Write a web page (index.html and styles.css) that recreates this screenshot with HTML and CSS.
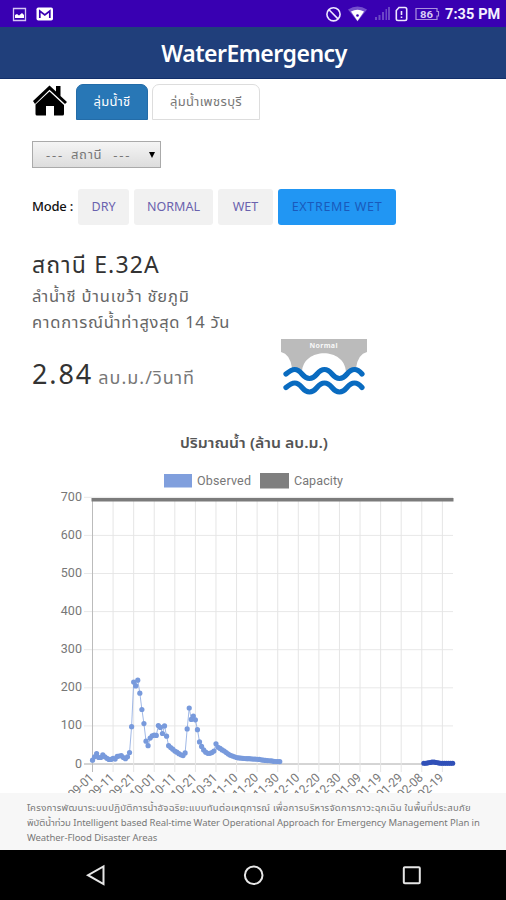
FILE: index.html
```html
<!DOCTYPE html>
<html lang="th">
<head>
<meta charset="utf-8">
<title>WaterEmergency</title>
<link rel="stylesheet" href="styles.css">
</head>
<body>
<div class="phone">
  <div class="status">
    <svg class="status-left" width="60" height="27" viewBox="0 0 60 27">
      <path d="M13.500 8.500h12v12h-12z" fill="none" stroke="#d5c5f4" stroke-width="1.300"/>
      <path d="M15 18v-3l2-1 2 1.500 3-2.500 2 2v3z" fill="#fff"/>
      <rect x="36.500" y="7.500" width="16.500" height="13" rx="1.800" fill="#fff"/>
      <path d="M39.800 18v-7l5 4 5-4v7" fill="none" stroke="#3900b2" stroke-width="1.700"/>
    </svg>
    <svg class="status-right" width="118" height="27" viewBox="322 0 118 27">
      <g fill="none" stroke="#eee8ff" stroke-width="1.600">
        <circle cx="333.500" cy="14.300" r="6.600"/><path d="M329 9.700l9 9.200"/>
        <path d="M399 7.500h6q1.700 0 1.700 1.700v9.600q0 1.700-1.700 1.700h-7q-1.700 0-1.700-1.700v-8.300zM401.500 11v4m0 1.500v1.500"/>
        <path d="M416 8.500h21v3h1.500v4.500H437v3.500h-21z" stroke="#ab91df" stroke-width="1.200"/>
      </g>
      <path d="M348 9.500q9.500-6 19 0l-9.500 12z" fill="#7450cc"/>
      <path d="M351 11.500q6.500-3.500 13 0l-6.500 9.500z" fill="#fff"/><circle cx="357.500" cy="15.500" r="1.300" fill="#3900b2"/>
      <path d="M375 17h2v3h-2zm3.500-2h2v5h-2zm3.500-3h2v8h-2zm3.500-3h1.500v11h-1.500zm2.500-2h2v13h-2z" fill="#6c47c6"/>
      <text class="battery" x="420" y="17.500" textLength="13" lengthAdjust="spacingAndGlyphs">86</text>
    </svg>
    <span class="clock">7:35 PM</span>
  </div>
  <header class="header"><h1>WaterEmergency</h1></header>
  <main class="main">
    <nav class="tabs">
      <svg class="home" width="36" height="34" viewBox="0 0 36 34">
        <path d="M1 17L17.500 1.500 24 7.500V2h4.500v10L35 18l-2 2L17.500 5.700 3 20z"/>
        <path d="M3.500 20.500L17.500 7.500 32 21v9q0 1.500-1.500 1.500H22V22h-8v9.500H5q-1.500 0-1.500-1.500z"/>
      </svg>
      <a class="tab active"><span>ลุ่มน้ำชี</span></a>
      <a class="tab"><span>ลุ่มน้ำเพชรบุรี</span></a>
    </nav>
    <div class="select"><span>---</span><span class="select-name">สถานี</span><span>---</span><i class="caret"></i></div>
    <div class="modes">
      <b class="mode-label">Mode :</b>
      <span class="mode dry">DRY</span><span class="mode normal">NORMAL</span><span class="mode wet">WET</span><span class="mode extreme">EXTREME WET</span>
    </div>
    <section class="station">
      <div class="name">สถานี E.32A</div>
      <div class="place">ลำน้ำชี บ้านเขว้า ชัยภูมิ</div>
      <div class="forecast">คาดการณ์น้ำท่าสูงสุด 14 วัน</div>
      <div class="reading">
        <div class="flow"><span class="value">2.84</span> <span class="unit">ลบ.ม./วินาที</span></div>
        <svg class="bridge" width="88" height="60" viewBox="0 0 88 60">
          <path d="M1 1h86v13q-9 2-11 16v4H66C65 9 23 9 22 34H12v-4Q10 16 1 14z" fill="#bbb"/>
          <text class="bridge-text" x="29.500" y="10" textLength="28">Normal</text>
          <g fill="none" stroke="#096bc0" stroke-width="5.200" stroke-linecap="round">
            <path d="M6 36c7-6 11-6 16 0s10 6 15 0 10-6 15 0 10 6 15 0 10-6 15 0"/>
            <path d="M6 49.500c7-6 11-6 16 0s10 6 15 0 10-6 15 0 10 6 15 0 10-6 15 0"/>
          </g>
        </svg>
      </div>
    </section>
    <svg class="chart" id="chart" width="506" height="368" viewBox="0 425 506 368"></svg>
  </main>
  <footer class="footer">
    <div class="f1">โครงการพัฒนาระบบปฏิบัติการน้ำอัจฉริยะแบบทันต่อเหตุการณ์ เพื่อการบริหารจัดการภาวะฉุกเฉิน ในพื้นที่ประสบภัย</div>
    <div class="f2">พิบัติน้ำท่วม Intelligent based Real-time Water Operational Approach for Emergency Management Plan in</div>
    <div class="f3">Weather-Flood Disaster Areas</div>
  </footer>
  <div class="navbar">
    <svg width="506" height="50" viewBox="0 850 506 50" fill="none" stroke="#e6e6e6" stroke-width="2">
      <path d="M103.500 866.500v17.500L88 875.200z"/><circle cx="253.700" cy="875.300" r="8.800"/><rect x="403.800" y="867.200" width="16" height="16" rx="1"/>
    </svg>
  </div>
</div>
<script src="chart.js"></script>
</body>
</html>
```
FILE: styles.css
```css
* { box-sizing: border-box; }
body { margin: 0; font-family: "Noto Sans", "Noto Sans Thai", "Liberation Sans", sans-serif; background: #fff; color: #333; }
.phone { width: 506px; height: 900px; display: flex; flex-direction: column; overflow: hidden; white-space: nowrap; }
.status { flex: none; height: 27px; background: #3900b2; display: flex; justify-content: space-between; align-items: center; }
.status-right { margin-left: auto; }
.battery { font: bold 9px "Roboto", sans-serif; fill: #d9ccf5; }
.clock { width: 66px; padding-left: 5px; font: 700 14.500px "Roboto", sans-serif; color: #f5f0ff; letter-spacing: .1px; line-height: 27px; padding-top: 1px; }
.header { flex: none; height: 52px; background: #203f7b; border-bottom: 1px solid #122f6b; display: flex; align-items: center; justify-content: center; }
h1 { margin: 0; color: #fff; font-size: 23px; font-weight: 600; line-height: 50px; letter-spacing: -.5px; padding-left: 2px; }
.main { flex: none; height: 714px; overflow: hidden; display: flex; flex-direction: column; align-items: flex-start; }
.tabs { display: flex; height: 41px; padding: 5px 0 0 32px; }
.home { margin-right: 8px; }
.tab { height: 36px; width: 72px; border-radius: 7px 7px 0 0; display: flex; align-items: center; justify-content: center; font-size: 13px; letter-spacing: .35px; color: #777; }
.tab.active { background: #2877b6; color: #fff; margin-right: 4px; border: 1px solid #236ca8; }
.tab:last-child { width: 108px; border: 1px solid #ddd; }
.select { margin: 21px 0 0 32px; width: 129px; height: 27px; border: 1px solid #aaa; background: linear-gradient(#f5f5f5, #ddd); display: flex; align-items: center; padding-left: 13px; font-size: 13px; letter-spacing: 1.800px; color: #777; }
.select-name { margin: 0 11px 0 7px; letter-spacing: .7px; }
.caret { margin-left: auto; margin-right: 5px; border: 3.500px solid transparent; border-top: 6px solid #000; border-bottom: 0; }
.modes { margin: 21px 0 0 32px; height: 36px; display: flex; align-items: center; }
.mode-label { width: 46px; font-size: 13px; font-weight: 500; letter-spacing: -.2px; line-height: 32px; padding-bottom: 3px; color: #111; }
.mode { height: 36px; margin-right: 5px; border-radius: 3px; background: #f1f1f1; color: #6a62ae; display: flex; align-items: center; justify-content: center; font-size: 12.500px; padding-bottom: 2px; }
.dry { width: 51px; } .normal { width: 79px; } .wet { width: 55px; }
.extreme { width: 118px; background: #2196f3; color: #1a5abb; letter-spacing: .7px; }
.station { padding-left: 32px; height: 200px; }
.name { margin-top: 23px; height: 32px; line-height: 32px; font-size: 23px; letter-spacing: 1.150px; color: #333; }
.place, .forecast { height: 27px; line-height: 27px; font-size: 16.500px; letter-spacing: .8px; color: #666; }
.place { padding-top: 2px; }
.forecast { padding-top: 1px; letter-spacing: .72px; }
.reading { display: flex; height: 70px; margin-top: -1px; }
.flow { width: 248px; padding-top: 18px; line-height: 46px; }
.value { font-size: 27px; letter-spacing: 1.900px; color: #333; }
.unit { font-size: 18px; letter-spacing: 1px; color: #777; margin-left: 1px; }
.bridge { margin-top: 5px; }
.bridge-text { font: bold 7px "Noto Sans", sans-serif; fill: #f8f8f8; }
.chart { flex: none; display: block; }
.chart-title { font-size: 14px; font-weight: 600; fill: #555; }
.chart-label { font-family: "Roboto", sans-serif; font-size: 12.500px; fill: #777; }
.footer { flex: none; height: 57px; background: #f7f7f7; padding: 7px 0 0 27px; color: #777; font-size: 9.500px; line-height: 15px; }
.footer div { height: 15px; }
.f1 { letter-spacing: .29px; }
.f2 { letter-spacing: -.07px; }
.f3 { letter-spacing: -.07px; }
.navbar { flex: none; height: 50px; background: #000; }
```
FILE: chart.js
```js
const chart = document.getElementById('chart');
function add(tag, attrs, text) {
  const el = document.createElementNS('http://www.w3.org/2000/svg', tag);
  for (const key in attrs) el.setAttribute(key, attrs[key]);
  if (text) el.textContent = text;
  chart.appendChild(el);
}
const left = 92.5, zero = 764, day = 2.058;
add('text', {x: 180, y: 448, class: 'chart-title', textLength: 148, lengthAdjust: 'spacingAndGlyphs'}, 'ปริมาณน้ำ (ล้าน ลบ.ม.)');
add('rect', {x: 164, y: 474, width: 28, height: 13.5, fill: '#809fdd'});
add('text', {x: 197, y: 484.5, class: 'chart-label', textLength: 54}, 'Observed');
add('rect', {x: 260, y: 473, width: 29, height: 15.5, fill: '#7f7f7f'});
add('text', {x: 294, y: 484.5, class: 'chart-label', textLength: 49}, 'Capacity');
for (let i = 0; i < 8; i++) {
  const y = zero - i * 38.1, s = String(i * 100), w = s.length * 7.1;
  add('line', {x1: 84, x2: 453, y1: y, y2: y, stroke: i ? '#e8e8e8' : '#aaa', 'stroke-width': 1});
  add('text', {x: 82 - w, y: y + 3.5, class: 'chart-label', textLength: w}, s);
}
['09-01','09-11','09-21','10-01','10-11','10-21','10-31','11-10','11-20','11-30','12-10','12-20','12-30','01-09','01-19','01-29','02-08','02-19'].forEach((label, i) => {
  const x = left + i * 20.58;
  add('line', {x1: x, x2: x, y1: 498, y2: 772, stroke: i ? '#e5e5e5' : '#bbb', 'stroke-width': 1});
  add('text', {x: 0, y: 0, class: 'chart-label', 'text-anchor': 'end', textLength: 30, lengthAdjust: 'spacingAndGlyphs', transform: `translate(${x + 2},778.5) rotate(-44)`}, label);
});
add('line', {x1: 91.5, x2: 453.5, y1: 499.7, y2: 499.7, stroke: '#7b7b7b', 'stroke-width': 3.6});
const flow = [10,19,27,17,17,24,19,15,12,12,15,13,20,21,22,17,14,19,30,98,215,205,220,186,143,106,60,48,68,74,76,75,101,96,80,100,73,48,43,39,34,31,27,24,22,29,92,147,117,126,116,90,58,46,37,31,28,28,30,34,53,44,41,37,34,30,26,23,21,19,17,16,15.5,15,14.5,14,14,13.5,13,13,12.5,12,11,10,9.5,9,8.5,8,7,6.5,6,6];
function series(values, start, color) {
  const pts = values.map((v, i) => [left + (start + i) * day, zero - v * .381]);
  add('polyline', {points: pts.join(' '), fill: 'none', stroke: color, 'stroke-width': 1, opacity: .7});
  pts.forEach(p => add('circle', {cx: p[0], cy: p[1], r: 2.6, fill: color}));
}
series(flow, 0, '#789adc');
series([2,2,3,4,5,5,4,3,2,2,2,2,2,2,2], 161, '#3050b8');
```
